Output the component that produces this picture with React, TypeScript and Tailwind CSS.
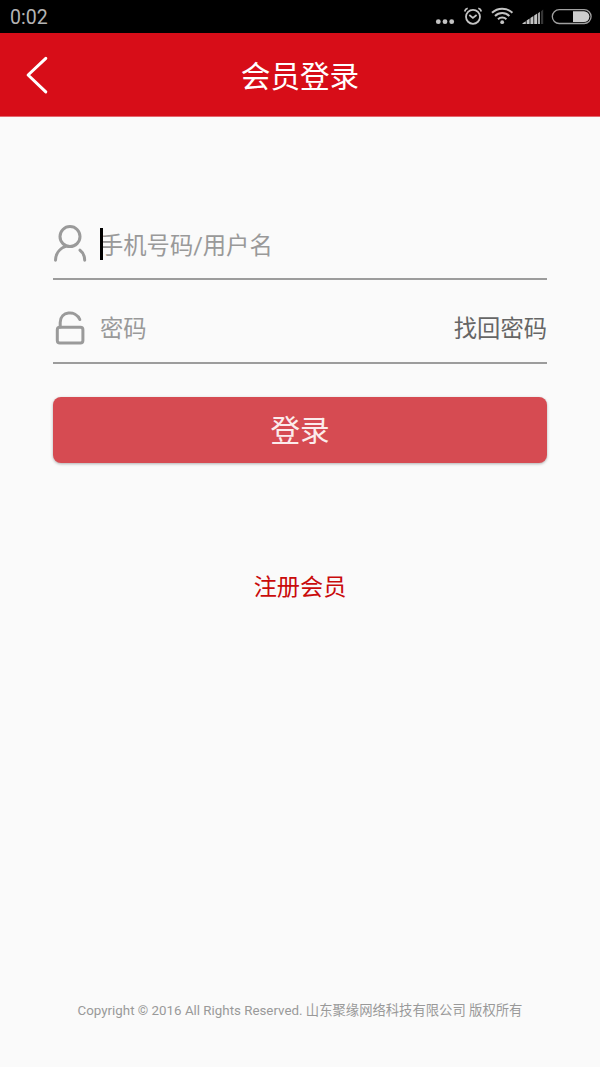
import React from "react";

function StatusBar() {
  return (
    <div className="flex h-[33px] items-center justify-between bg-black pl-[10px] pr-[7px] text-[#b4b4b4]">
      <span className="text-[19.5px] leading-none pt-[3px]">0:02</span>
      <svg width="160" height="33" viewBox="433 0 160 33" fill="none" stroke="#c4c4c4">
        <g fill="#c4c4c4" stroke="none">
          <circle cx="438.3" cy="21.7" r="2.4" />
          <circle cx="445" cy="21.7" r="2.4" />
          <circle cx="451.7" cy="21.7" r="2.4" />
          <circle cx="502.2" cy="22.2" r="1.9" />
          <path d="M522.5 24v-.8l3.3-2V24zM526.6 24v-3.4l3-2V24zM530.4 24v-5.9l3-2V24zM534.2 24v-8.4l3-2V24z" />
          <path d="M538 24V13.2l2-1.4V24z" fill="#a8a8a8" />
          <path d="M541 24V11.2l2.2-1.6V24z" fill="#353535" />
          <path d="M573 11.2h11a5.4 5.4 0 0 1 0 10.8H573z" fill="#cecece" />
        </g>
        <circle cx="473" cy="16.8" r="7" strokeWidth="1.8" />
        <path d="M469.3 15l3.6 3 3.7-3M464.7 11.5c.3-1.5 1.5-2.8 3-3.2M481.3 11.5c-.3-1.5-1.5-2.8-3-3.2" strokeWidth="1.7" />
        <path d="M498 19.2a6 6 0 0 1 8.4 0M495 16a10.3 10.3 0 0 1 14.4 0M492 12.8a14.7 14.7 0 0 1 20.4 0" strokeWidth="2" />
        <rect x="552.3" y="9.7" width="38.8" height="13.8" rx="6.9" strokeWidth="1.3" stroke="#a0a0a0" />
      </svg>
    </div>
  );
}

function UserIcon() {
  return (
    <svg className="shrink-0" width="34" height="40" viewBox="53 223 34 40" fill="none" stroke="#9a9a9a" strokeWidth="3" strokeLinecap="round">
      <circle cx="70" cy="236.6" r="10" />
      <path d="M55.5 260.3c.1-5.8 3.4-11.6 10.2-13.9M80 250.2c3.1 2.3 4.6 5.8 4.7 10" />
    </svg>
  );
}

function LockIcon() {
  return (
    <svg className="shrink-0" width="34" height="40" viewBox="53 308 34 40" fill="none" stroke="#9a9a9a" strokeWidth="3" strokeLinecap="round">
      <rect x="57.3" y="327.3" width="25.6" height="15.8" rx="2.5" />
      <path d="M60.2 327v-4.5c0-11.5 15.5-12.8 19.6-3" />
    </svg>
  );
}

export default function App() {
  return (
    <div className="flex h-[1067px] w-[600px] flex-col bg-[#fafafa] font-[Roboto,'Noto_Sans_CJK_SC',sans-serif]">
      <StatusBar />
      <header className="grid h-[84px] grid-cols-[80px_1fr_80px] items-center border-b border-[#e4676e] bg-[#d70d18] text-white">
        <button aria-label="返回" className="pl-[25px]">
          <svg width="24" height="40" viewBox="25 55 24 40" fill="none" stroke="currentColor" strokeWidth="3" strokeLinecap="round" strokeLinejoin="round">
            <path d="M45.8 58.3L28.1 75l17.7 16.9" />
          </svg>
        </button>
        <h1 className="pt-[4px] text-center text-[29.6px] leading-[44px]">会员登录</h1>
      </header>

      <main className="flex flex-1 flex-col px-[53px] pt-[93px]">
        <div className="flex h-[70px] border-b-2 border-[#9c9c9c] pt-[13px] text-[23.3px] leading-[34px] text-[#999]">
          <UserIcon />
          <div className="relative ml-[13px] pt-[6px]">
            手机号码/用户名
            <span className="absolute left-0 top-[5px] h-8 w-[3px] bg-black" />
          </div>
        </div>
        <div className="flex h-[84px] border-b-2 border-[#9c9c9c] pt-[28px] text-[23.3px] leading-[34px] text-[#999]">
          <LockIcon />
          <div className="ml-[13px] pt-[4px]">密码</div>
          <a className="ml-auto pt-[4px] text-[#666]">找回密码</a>
        </div>
        <button className="mt-[33px] h-[66px] rounded-lg bg-[#d64b52] pt-[2px] text-[29.6px] leading-[44px] text-[#fbecec] shadow-[0_1px_3px_rgba(0,0,0,0.3)]">
          登录
        </button>
        <a className="mt-[107px] text-center text-[23.2px] leading-[34px] text-[#c90b0b]">注册会员</a>
        <footer className="mt-auto mb-[46px] whitespace-nowrap text-center text-[13.33px] leading-[20px] text-[#999]">
          Copyright © 2016 All Rights Reserved. 山东聚缘网络科技有限公司 版权所有
        </footer>
      </main>
    </div>
  );
}
